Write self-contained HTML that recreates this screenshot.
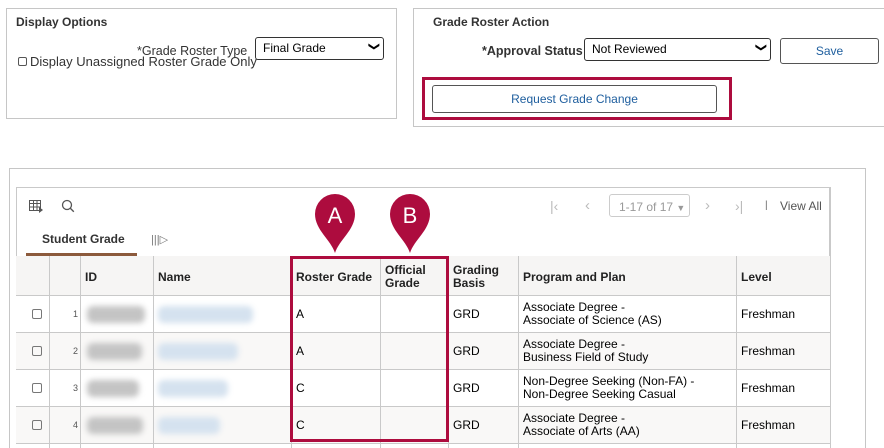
<!DOCTYPE html>
<html style="overflow:hidden;height:448px"><head><meta charset="utf-8"><style>
*{box-sizing:border-box;margin:0;padding:0}
body{width:884px;height:448px;overflow:hidden;background:#fff;font-family:"Liberation Sans",Arial,sans-serif;font-size:12px;color:#000;position:relative}
.a{position:absolute}
.box{border:1px solid #c6c6c6}
.sel{border:1px solid #333;border-radius:3px;background:#fff;font-size:12px;padding:3px 7px}
.btn{border:1px solid #555;border-radius:3px;background:#fff;color:#1e5e9e;text-align:center;font-size:12px}
.hd{font-weight:bold;color:#333}
.cell{position:absolute;border-right:1px solid #c9c9c9;border-bottom:1px solid #c9c9c9}
.blur{position:absolute;border-radius:6px;filter:blur(3px)}
</style></head><body>
<div class="a box" style="left:6px;top:8px;width:391px;height:111px"></div>
<div class="a hd" style="left:16px;top:15px">Display Options</div>
<div class="a" style="left:137px;top:44px;font-size:12.5px;color:#333">*Grade Roster Type</div>
<div class="a" style="left:18px;top:54px;font-size:13px;color:#333"><span style="display:inline-block;width:9px;height:9px;border:1px solid #555;border-radius:2px;vertical-align:0px;margin-right:3px"></span>Display Unassigned Roster Grade Only</div>
<div class="a sel" style="left:255px;top:37px;width:129px;height:23px">Final Grade</div>
<div class="a" style="left:370px;top:40px;font-size:11px;transform:rotate(90deg)">&#10095;</div>
<div class="a box" style="left:413px;top:8px;width:480px;height:119px"></div>
<div class="a hd" style="left:433px;top:15px">Grade Roster Action</div>
<div class="a" style="left:482px;top:44px;color:#333;font-weight:bold;font-size:12.5px">*Approval Status</div>
<div class="a sel" style="left:584px;top:38px;width:187px;height:23px;padding-top:3px">Not Reviewed</div>
<div class="a" style="left:757px;top:41px;font-size:11px;transform:rotate(90deg)">&#10095;</div>
<div class="a btn" style="left:780px;top:38px;width:99px;height:26px;line-height:24px">Save</div>
<div class="a" style="left:422px;top:77px;width:310px;height:43px;border:3.5px solid #ad0c3e"></div>
<div class="a btn" style="left:432px;top:85px;width:285px;height:28px;line-height:26px">Request Grade Change</div>
<div class="a box" style="left:9px;top:168px;width:857px;height:300px"></div>
<div class="a" style="left:16px;top:187px;width:815px;height:280px;border-left:1px solid #c9c9c9;border-top:1px solid #c9c9c9;border-right:2px solid #c9c9c9"></div>
<svg class="a" style="left:28px;top:199px" width="16" height="14" viewBox="0 0 16 14"><g fill="none" stroke="#555" stroke-width="1"><rect x="1.5" y="1.5" width="11" height="10"/><path d="M1.5 4.5h11M1.5 8h11M5.5 1.5v10M9 1.5v10"/></g><path d="M11 8l4 3-4 3z" fill="#555"/></svg>
<svg class="a" style="left:61px;top:199px" width="14" height="14" viewBox="0 0 14 14"><circle cx="6" cy="6" r="4.5" fill="none" stroke="#555" stroke-width="1.3"/><path d="M9.3 9.3l3.5 3.5" stroke="#555" stroke-width="1.4"/></svg>
<div class="a" style="left:550px;top:198px;color:#bbb;font-size:14px">|&lsaquo;</div>
<div class="a" style="left:585px;top:197px;color:#bbb;font-size:15px">&lsaquo;</div>
<div class="a" style="left:609px;top:194px;width:81px;height:23px;border:1px solid #ccc;border-radius:3px;color:#999;padding:5px 0 0 9px">1-17 of 17 <span style="font-size:9px">&#9660;</span></div>
<div class="a" style="left:705px;top:197px;color:#bbb;font-size:15px">&rsaquo;</div>
<div class="a" style="left:735px;top:198px;color:#bbb;font-size:14px">&rsaquo;|</div>
<div class="a" style="left:765px;top:200px;color:#666;font-size:10px">|</div>
<div class="a" style="left:780px;top:199px;color:#555">View All</div>
<div class="a" style="left:42px;top:232px;font-weight:bold;color:#333">Student Grade</div>
<div class="a" style="left:151px;top:233px;color:#777;font-size:11px">|||&#9655;</div>
<div class="a" style="left:26px;top:253px;width:111px;height:3px;background:#8c5a3c"></div>
<div id="t"></div>
<div class="a" style="left:290px;top:256px;width:159px;height:186px;border:3px solid #ad0c3e"></div>
<svg class="a" style="left:313px;top:192px" width="44" height="62" viewBox="0 0 44 62"><path d="M22 61C18 48 2 38 2 22A20 20 0 0 1 42 22C42 38 26 48 22 61Z" fill="#ad0c3e"/><text x="22" y="31" text-anchor="middle" font-family="Liberation Sans" font-size="22" fill="#fff">A</text></svg>
<svg class="a" style="left:388px;top:192px" width="44" height="62" viewBox="0 0 44 62"><path d="M22 61C18 48 2 38 2 22A20 20 0 0 1 42 22C42 38 26 48 22 61Z" fill="#ad0c3e"/><text x="22" y="31" text-anchor="middle" font-family="Liberation Sans" font-size="22" fill="#fff">B</text></svg>
<script>
var cols=[16,50,81,154,292,381,449,519,737,831];
var rows=[256,296,333,370,407,444,448];
var h=["","","ID","Name","Roster Grade","Official<br>Grade","Grading<br>Basis","Program and Plan","Level"];
var data=[["A","Associate Degree -<br>Associate of Science (AS)",58,95],["A","Associate Degree -<br>Business Field of Study",55,80],["C","Non-Degree Seeking (Non-FA) -<br>Non-Degree Seeking Casual",52,70],["C","Associate Degree -<br>Associate of Arts (AA)",56,62]];
var s="";
for(var r=0;r<6;r++){var bg=r==0?"#f6f5f4":(r%2?"#fff":"#f9f8f7");
for(var c=0;c<9;c++){var x=cols[c],w=cols[c+1]-x,y=rows[r],hh=rows[r+1]-y;var t="",st="";
if(r==5){s+='<div class="cell" style="left:'+x+'px;top:'+y+'px;width:'+w+'px;height:'+hh+'px;background:#fff;border-bottom:none"></div>';continue;}
if(r==0){t=h[c];st="font-weight:bold;color:#222;padding-top:3px;";}
else{var d=data[r-1];
if(c==0)t='<span style="display:inline-block;width:10px;height:10px;border:1px solid #777;border-radius:2px;margin-left:12px"></span>';
if(c==1){t='<span style="font-size:9px;color:#555">'+r+'</span>';st="justify-content:flex-end;padding-right:2px;";}
if(c==4)t=d[0];if(c==6)t="GRD";if(c==7)t=d[1];if(c==8)t="Freshman";}
s+='<div class="cell" style="left:'+x+'px;top:'+y+'px;width:'+w+'px;height:'+hh+'px;background:'+bg+';display:flex;align-items:center;padding-left:'+(c==1?0:4)+'px;line-height:13px;'+st+'">'+t+'</div>';
if(r>0&&c==2)s+='<div class="blur" style="left:'+(x+6)+'px;top:'+(y+10)+'px;width:'+d[2]+'px;height:17px;background:#c4c4c4"></div>';
if(r>0&&c==3)s+='<div class="blur" style="left:'+(x+4)+'px;top:'+(y+10)+'px;width:'+d[3]+'px;height:17px;background:#d5e2ef"></div>';
}}
document.getElementById("t").innerHTML=s;
</script>
</body></html>
